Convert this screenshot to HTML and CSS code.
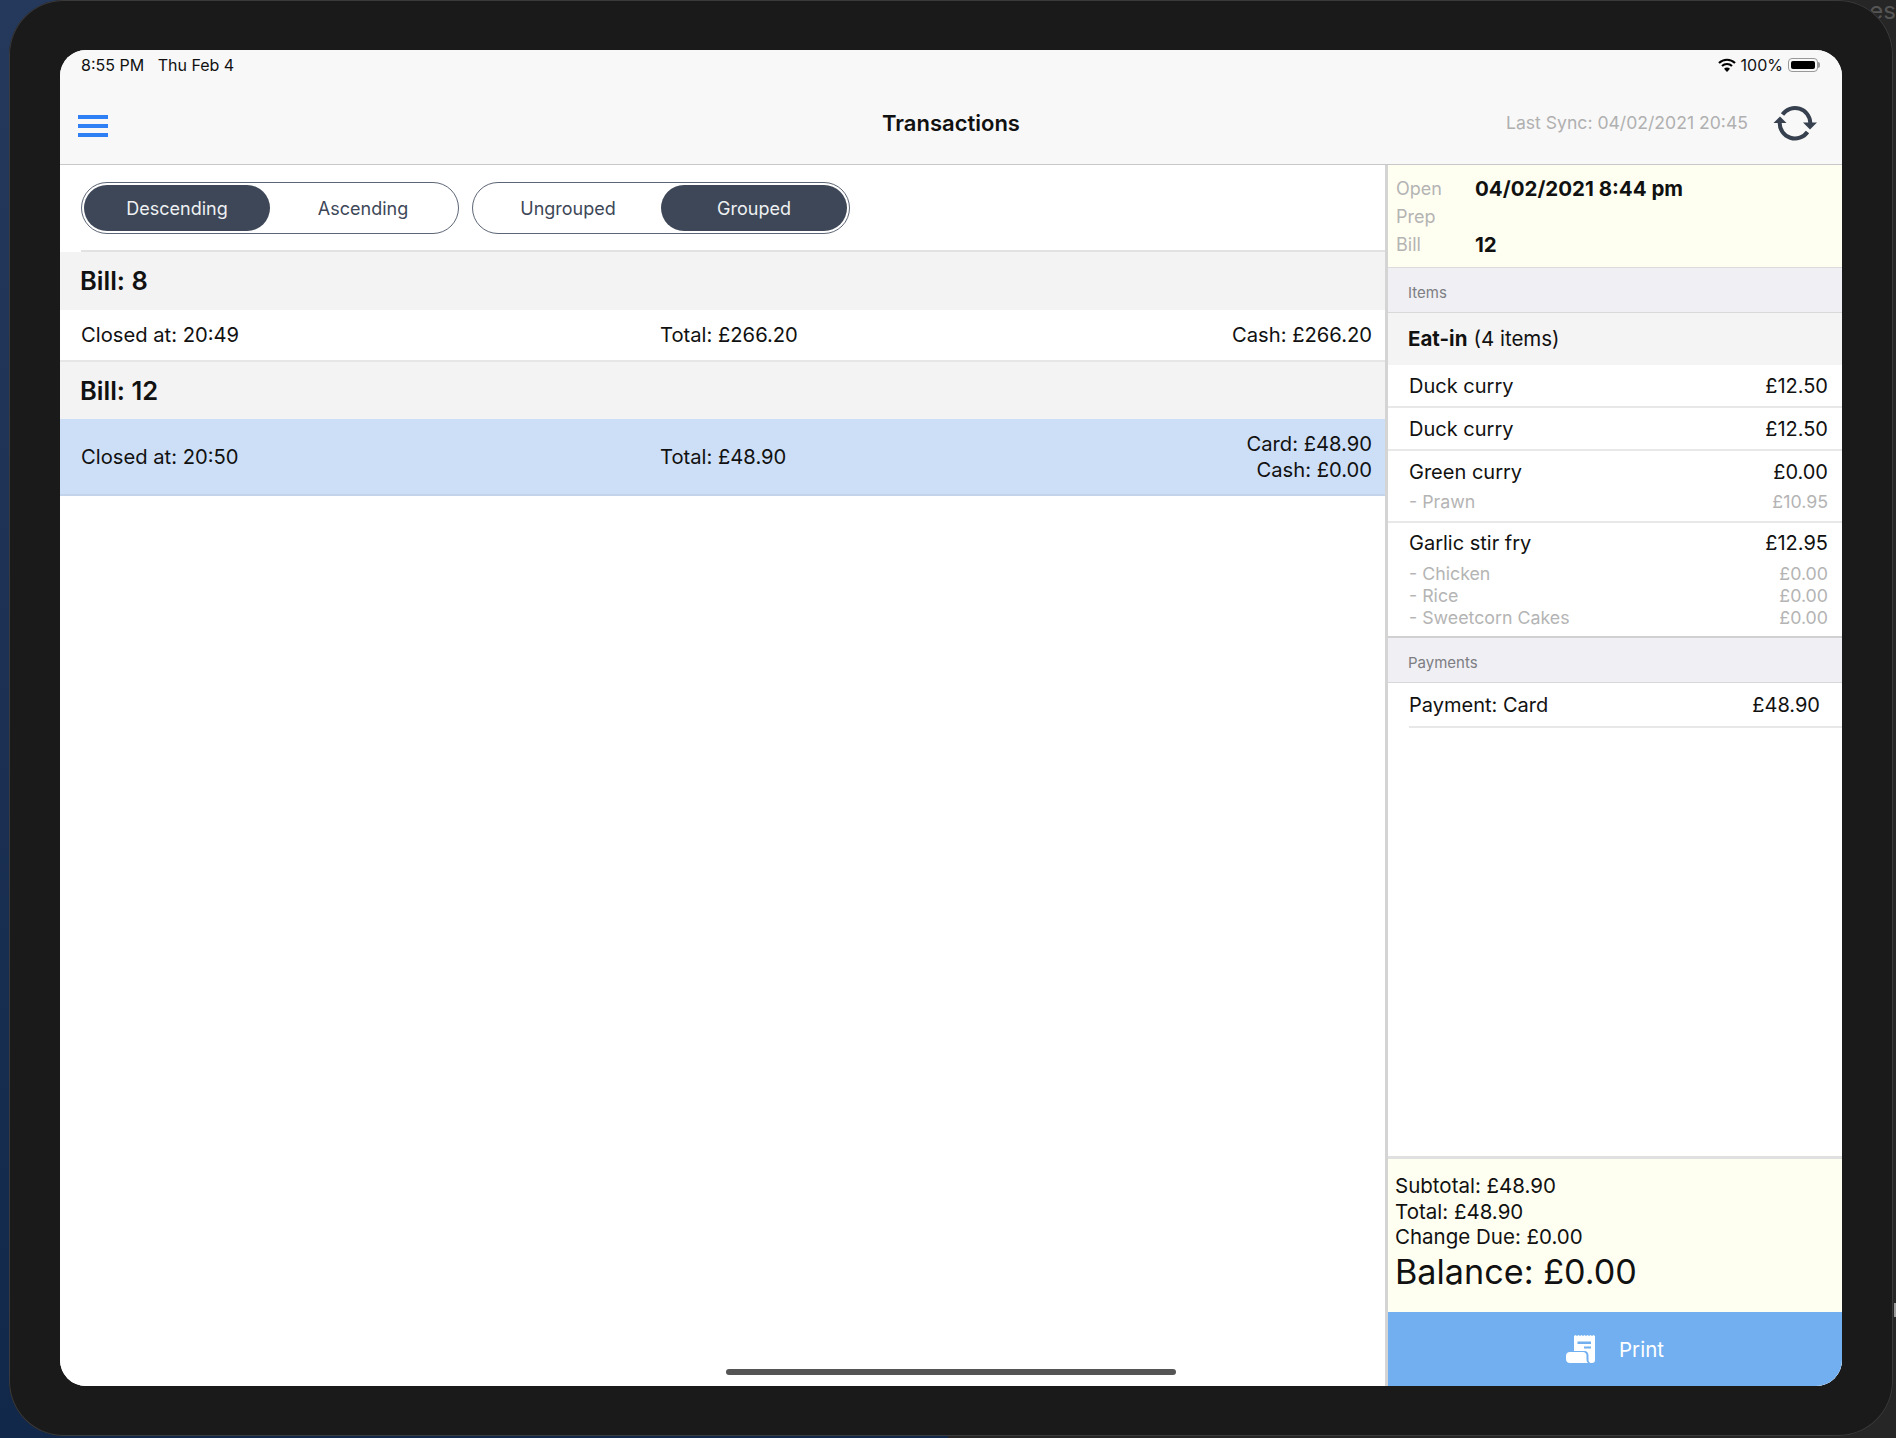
FILE: index.html
```html
<!DOCTYPE html>
<html lang="en">
<head>
  <meta charset="UTF-8" />
  <title>Transactions</title>
  <link rel="stylesheet" href="styles.css">
</head>
<body>
  <span class="peek-text">es</span>
  <span class="edge-mark"></span>
  <div class="bezel">
    <div class="screen">
      <div class="statusbar">
        <span>8:55 PM&nbsp;&nbsp; Thu Feb 4</span>
        <span class="status-right">
          <svg class="wifi" width="18" height="14" viewBox="0 0 18 14"><path d="M1 5a11.5 11.5 0 0 1 16 0" fill="none" stroke="#000" stroke-width="2.2"/><path d="M4 8a7.2 7.2 0 0 1 10 0" fill="none" stroke="#000" stroke-width="2.2"/><path d="M9 14 6 10.800a4 4 0 0 1 6 0z" fill="#000"/></svg>
          <span>100%</span>
          <span class="battery"><span class="battery-fill"></span></span>
        </span>
      </div>
      <header class="navbar">
        <div class="hamburger"><i></i><i></i><i></i></div>
        <div class="nav-title">Transactions</div>
        <div class="sync">
          <span>Last Sync: 04/02/2021 20:45</span>
          <svg width="46" height="38" viewBox="0 0 46 38">
            <path d="M10.500 10.500A15.300 15.300 0 0 1 38.300 19" fill="none" stroke="#36404f" stroke-width="4"/>
            <path d="M31 18.500H45L38 25.500z" fill="#36404f"/>
            <path d="M7.700 19A15.300 15.300 0 0 0 35.500 28" fill="none" stroke="#36404f" stroke-width="4"/>
            <path d="M1.500 19H14.500L8 12.500z" fill="#36404f"/>
          </svg>
        </div>
      </header>
      <div class="content">
        <main class="list">
          <div class="toolbar">
            <div class="segment">
              <span class="seg on">Descending</span>
              <span class="seg">Ascending</span>
            </div>
            <div class="segment">
              <span class="seg">Ungrouped</span>
              <span class="seg on">Grouped</span>
            </div>
          </div>
          <div class="bill-head">Bill: 8</div>
          <div class="bill-row">
            <span class="col">Closed at: 20:49</span>
            <span class="col">Total: £266.20</span>
            <span class="col pay">Cash: £266.20</span>
          </div>
          <div class="bill-head">Bill: 12</div>
          <div class="bill-row selected">
            <span class="col">Closed at: 20:50</span>
            <span class="col">Total: £48.90</span>
            <span class="col pay">Card: £48.90<br>Cash: £0.00</span>
          </div>
          <div class="home-bar"></div>
        </main>
        <aside class="detail">
          <div class="info">
            <div class="info-row"><span class="info-label">Open</span><b>04/02/2021 8:44 pm</b></div>
            <div class="info-row"><span class="info-label">Prep</span></div>
            <div class="info-row"><span class="info-label">Bill</span><b>12</b></div>
          </div>
          <div class="section">Items</div>
          <div class="group"><b>Eat-in</b> (4 items)</div>
          <div class="item"><div class="line"><span>Duck curry</span><span>£12.50</span></div></div>
          <div class="item"><div class="line"><span>Duck curry</span><span>£12.50</span></div></div>
          <div class="item">
            <div class="line"><span>Green curry</span><span>£0.00</span></div>
            <div class="mods">
              <div class="mod"><span>- Prawn</span><span>£10.95</span></div>
            </div>
          </div>
          <div class="item last">
            <div class="line"><span>Garlic stir fry</span><span>£12.95</span></div>
            <div class="mods">
              <div class="mod"><span>- Chicken</span><span>£0.00</span></div>
              <div class="mod"><span>- Rice</span><span>£0.00</span></div>
              <div class="mod"><span>- Sweetcorn Cakes</span><span>£0.00</span></div>
            </div>
          </div>
          <div class="section">Payments</div>
          <div class="payment"><span>Payment: Card</span><span>£48.90</span></div>
          <div class="spacer"></div>
          <div class="totals">
            <div>Subtotal: £48.90</div>
            <div>Total: £48.90</div>
            <div>Change Due: £0.00</div>
            <div class="balance">Balance: £0.00</div>
          </div>
          <div class="print">
            <svg width="29" height="28" viewBox="0 0 29 28">
              <path d="M8 1 9.500 0 11 1 12.500 0 14 1 15.500 0 17 1 18.500 0 20 1 21.500 0 23 1 24.500 0 26 1 27.500 0 29 1V25a3 3 0 0 1-3 3H25c-1.500 0-2.500-1.500-2.500-3V20.500c0-2.500-1.500-4.500-4-4.500H8z" fill="#fff"/>
              <path d="M11.500 6.500H25V9H11.500zM18 11.500H25V13.500H18z" fill="#71aff0"/>
              <path d="M0 21c0-2.500 1.500-4 4-4H17c2 0 3.500 1.500 3.500 3.500V24c0 2 .5 3 1.500 4H4c-2.500 0-4-1.500-4-4z" fill="#fff"/>
            </svg>
            <span>Print</span>
          </div>
        </aside>
      </div>
    </div>
  </div>
</body>
</html>
```
FILE: styles.css
```css
* {
  box-sizing: border-box;
}
html, body {
  margin: 0;
  height: 100%;
}
body {
  width: 1896px;
  height: 1438px;
  position: relative;
  overflow: hidden;
  font-family: Inter, "Liberation Sans", sans-serif;
  color: #111;
  background: linear-gradient(90deg, transparent 50%, #262626 50%), linear-gradient(180deg, #24395c 0%, #12284a 100%);
}
.peek-text {
  position: absolute;
  top: 0;
  right: 0;
  font-size: 24px;
  line-height: 22px;
  color: #555;
}
.edge-mark {
  position: absolute;
  top: 1303px;
  right: 0;
  width: 2px;
  height: 14px;
  background: #999;
}
.bezel {
  position: relative;
  width: 1884px;
  height: 1436px;
  margin-left: 9px;
  padding: 50px 51px;
  background: #1a1a1a;
  border-radius: 55px;
  box-shadow: inset 0 0 0 1px #3a3a3c;
}
.screen {
  height: 1336px;
  display: flex;
  flex-direction: column;
  background: #fff;
  border-radius: 26px;
  overflow: hidden;
}
.statusbar {
  height: 31px;
  padding: 0 20px 2px 21px;
  display: flex;
  justify-content: space-between;
  align-items: center;
  font-size: 16px;
  background: #f8f8f8;
}
.status-right {
  display: flex;
  align-items: center;
  gap: 5px;
}
.battery {
  position: relative;
  width: 30px;
  height: 14px;
  margin-right: 4px;
  padding: 2px;
  border: 1px solid #999;
  border-radius: 4px;
}
.battery::after {
  content: "";
  position: absolute;
  left: 29px;
  top: 3px;
  width: 2px;
  height: 6px;
  background: #999;
  border-radius: 0 2px 2px 0;
}
.battery-fill {
  display: block;
  height: 100%;
  background: #000;
  border-radius: 2px;
}
.navbar {
  height: 84px;
  padding: 0 24px 0 18px;
  display: flex;
  align-items: center;
  position: relative;
  background: #f8f8f8;
  border-bottom: 1px solid #c8c8c8;
}
.hamburger {
  width: 30px;
  margin-top: 6px;
  display: flex;
  flex-direction: column;
  gap: 5px;
}
.hamburger i {
  height: 4px;
  background: #2f80f5;
}
.nav-title {
  position: absolute;
  left: 0;
  right: 0;
  top: 27px;
  text-align: center;
  font-size: 22px;
  font-weight: 600;
  line-height: 30px;
}
.sync {
  margin-left: auto;
  display: flex;
  align-items: center;
  gap: 24px;
  font-size: 17.6px;
  color: #b0b0b0;
}
.content {
  flex: 1;
  display: flex;
  min-height: 0;
}
.list {
  flex: 1;
  position: relative;
  background: #fff;
}
.toolbar {
  height: 87px;
  margin-left: 21px;
  padding-top: 17px;
  display: flex;
  gap: 13px;
  border-bottom: 2px solid #e2e2e2;
}
.segment {
  width: 378px;
  height: 52px;
  padding: 2px;
  display: flex;
  border: 1.5px solid #5d6675;
  border-radius: 26px;
}
.seg {
  flex: 1;
  display: flex;
  align-items: center;
  justify-content: center;
  font-size: 18px;
  color: #3d4757;
  border-radius: 24px;
}
.seg.on {
  background: #3d4757;
  color: #eef0f2;
}
.bill-head {
  height: 57.5px;
  padding-left: 20px;
  display: flex;
  align-items: center;
  font-size: 25.5px;
  font-weight: 600;
  background: #f3f3f3;
}
.bill-row {
  height: 52px;
  padding: 0 13px 0 21px;
  display: grid;
  grid-template-columns: 579px 1fr auto;
  align-items: center;
  font-size: 20.2px;
  line-height: 26px;
  border-bottom: 2px solid #e6e6e6;
}
.bill-row.selected {
  height: 77px;
  background: #cddff6;
  border-bottom-color: #c3d4ea;
}
.pay {
  text-align: right;
}
.home-bar {
  position: absolute;
  left: 666px;
  bottom: 11px;
  width: 450px;
  height: 6px;
  background: #555;
  border-radius: 3px;
}
.detail {
  width: 457px;
  display: flex;
  flex-direction: column;
  background: #fff;
  border-left: 3px solid #d4d4d4;
}
.info {
  height: 103px;
  padding: 9px 6px 0 8px;
  font-size: 20.5px;
  background: #fffff1;
  border-bottom: 1px solid #dcdcdc;
}
.info-row {
  height: 28px;
  display: flex;
  align-items: center;
}
.info-row b {
  font-weight: 700;
}
.info-label {
  width: 79px;
  font-size: 18px;
  color: #b4b4b4;
}
.section {
  height: 45px;
  padding: 5px 0 0 20px;
  display: flex;
  align-items: center;
  font-size: 15px;
  color: #7d7d82;
  background: #efeff4;
  border-bottom: 1px solid #d8d8d8;
}
.group {
  height: 52px;
  padding: 0 0 1px 20px;
  display: flex;
  align-items: center;
  gap: 6px;
  font-size: 20.5px;
  background: #f4f4f4;
}
.group b {
  font-weight: 700;
}
.item {
  padding: 0 14px 0 21px;
  border-bottom: 2px solid #e8e8e8;
}
.item.last {
  border-bottom-color: #d0d0d0;
}
.line {
  height: 41px;
  display: flex;
  justify-content: space-between;
  align-items: center;
  font-size: 20px;
}
.mods {
  margin-top: -1.5px;
  padding-bottom: 8px;
}
.mod {
  height: 22px;
  display: flex;
  justify-content: space-between;
  align-items: center;
  font-size: 17.8px;
  color: #b4b4b4;
}
.payment {
  height: 45px;
  margin-left: 21px;
  padding-right: 22px;
  display: flex;
  justify-content: space-between;
  align-items: center;
  font-size: 20px;
  border-bottom: 2px solid #e8e8e8;
}
.spacer {
  flex: 1;
}
.totals {
  height: 156px;
  padding: 14px 7px 0;
  font-size: 20.5px;
  line-height: 25.7px;
  background: #fffff1;
  border-top: 3px solid #e0e0e0;
}
.balance {
  font-size: 34.2px;
  line-height: 44px;
}
.print {
  height: 74px;
  display: flex;
  align-items: center;
  justify-content: center;
  gap: 24px;
  font-size: 20.5px;
  color: #fff;
  background: #71aff0;
}
```
